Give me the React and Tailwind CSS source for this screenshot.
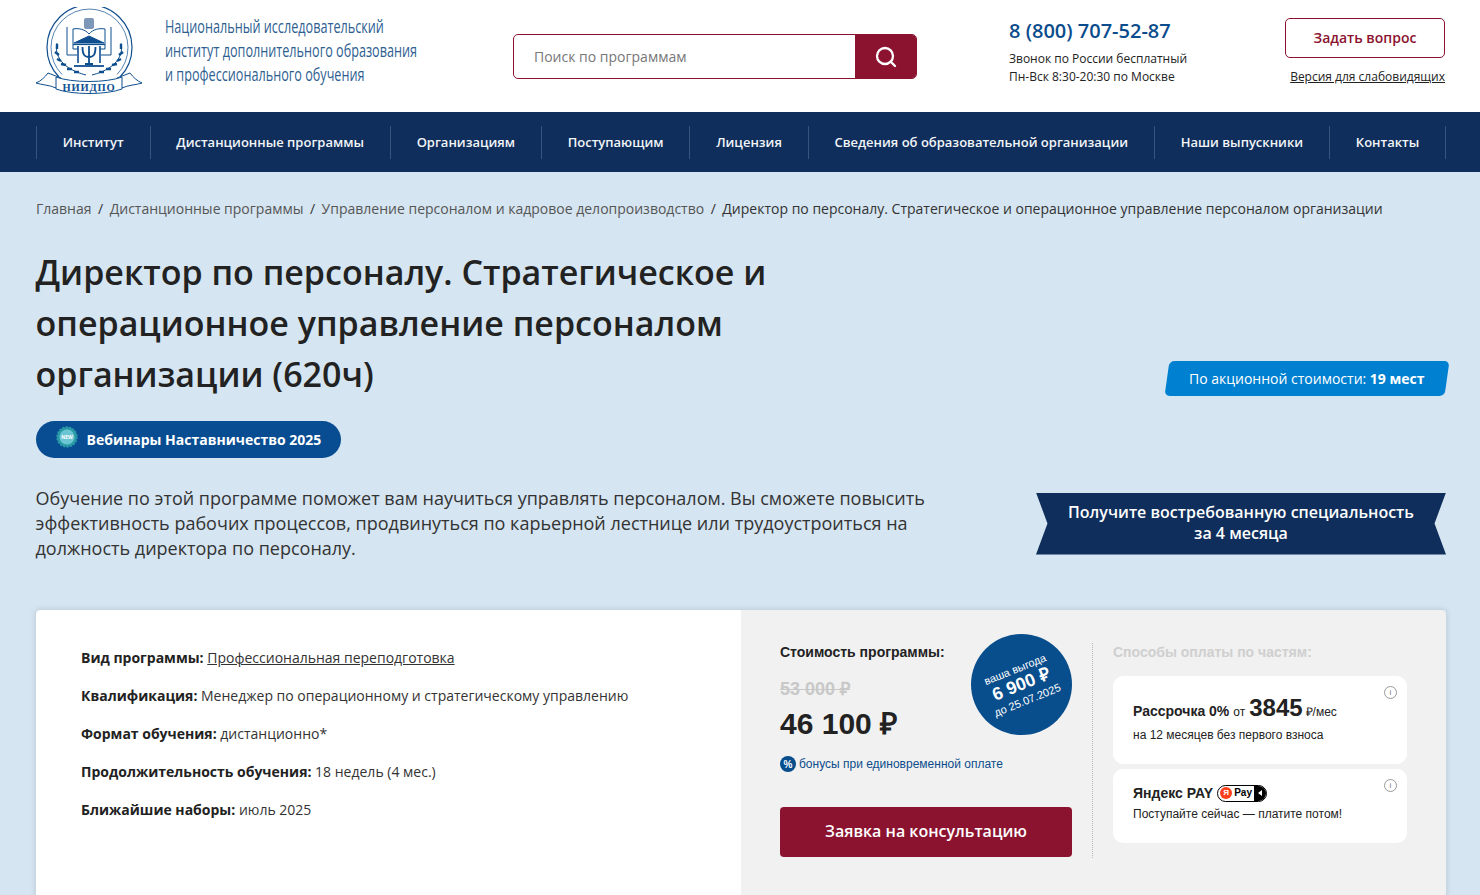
import { Search } from "lucide-react";

const navItems = [
  "Институт",
  "Дистанционные программы",
  "Организациям",
  "Поступающим",
  "Лицензия",
  "Сведения об образовательной организации",
  "Наши выпускники",
  "Контакты",
];

const crumbs = [
  "Главная",
  "Дистанционные программы",
  "Управление персоналом и кадровое делопроизводство",
];

const facts = [
  ["Квалификация:", "Менеджер по операционному и стратегическому управлению"],
  ["Формат обучения:", "дистанционно*"],
  ["Продолжительность обучения:", "18 недель (4 мес.)"],
  ["Ближайшие наборы:", "июль 2025"],
];

function Logo() {
  return (
    <svg width="108" height="90" viewBox="0 0 108 90" fill="none" stroke="#0f4f8f" strokeWidth="1" className="shrink-0">
      {/* кольцо */}
      <path d="M23 70A42.500 42.500 0 1 1 84 70" strokeWidth="1.2" />
      <path d="M26 67.500A38.500 38.500 0 1 1 81 67.500" strokeWidth="0.7" />
      {/* герб и книга */}
      <rect x="48" y="11" width="10" height="11" rx="2" fill="#7d97b8" stroke="none" />
      <path d="M53 27C49 22 42 21 37 22V42H42M53 27C57 22 64 21 69 22V42H64" />
      <path d="M31 20V48H41M75 20V48H65" />
      {/* портик и пси */}
      <path d="M38 36H68L53 29Z" fill="#0f4f8f" />
      <path d="M37 37.500H69" strokeWidth="1.2" />
      <path d="M42 39V56M64 39V56" strokeWidth="1.6" />
      <path d="M46.500 40C46.500 47 48 50 53 50C58 50 59.500 47 59.500 40M53 39V57M49 57H57" strokeWidth="1.8" />
      <path d="M38 59H68" strokeWidth="1.8" />
      {/* ветви */}
      <path d="M21 36C18 48 26 62 50 68M85 36C88 48 80 62 56 68" strokeWidth="1" />
      <path d="M21 37l0 5M19 45l4 3M21 52l4 2M25 57l5 1M31 62l5 0M38 65l5 0M85 37l0 5M87 45l-4 3M85 52l-4 2M81 57l-5 1M75 62l-5 0M68 65l-5 0" strokeWidth="2.4" />
      {/* лента */}
      <path d="M0 76C5 74 9 70 12 66L25 71L20 81C14 78 6 78 0 76ZM106 76C101 74 97 70 94 66L81 71L86 81C92 78 100 78 106 76Z" fill="#fff" />
      <path d="M20 70C36 76 70 76 86 70V82C70 88 36 88 20 82Z" fill="#fff" />
      <text x="53" y="84" textAnchor="middle" fill="#0f4f8f" stroke="none" fontSize="10.500" fontWeight="700" letterSpacing="0.8" fontFamily="Liberation Serif, serif">
        НИИДПО
      </text>
    </svg>
  );
}

function Header() {
  return (
    <header className="flex h-[112px] bg-white pl-9 pr-[34px]">
      <div className="flex w-[477px] shrink-0 pt-[7px]">
        <Logo />
        <div className="ml-[21px] mt-[7px] origin-left scale-x-[0.703] whitespace-nowrap text-[18px] leading-[24px] text-[#2f5f92]">
          <div>Национальный исследовательский</div>
          <div>институт дополнительного образования</div>
          <div>и профессионального обучения</div>
        </div>
      </div>
      <div className="mt-[34px] flex h-[45px] w-[404px] shrink-0 overflow-hidden rounded-[5px] border border-[#8b132f]">
        <div className="flex flex-1 items-center pl-5 text-[14px] text-[#777]">Поиск по программам</div>
        <div className="flex w-[61px] items-center justify-center bg-[#8b132f]">
          <Search size={24} color="#fff" strokeWidth={2.3} />
        </div>
      </div>
      <div className="ml-[92px] w-[276px] shrink-0 pt-[17px]">
        <div className="text-[20px] font-semibold leading-[27px] text-[#0b4c8c]">8 (800) 707-52-87</div>
        <div className="mt-[6px] text-[12px] leading-[18px] text-[#222]">Звонок по России бесплатный</div>
        <div className="text-[12px] leading-[18px] text-[#222]">Пн-Вск 8:30-20:30 по Москве</div>
      </div>
      <div className="w-[160px] shrink-0 pt-[18px]">
        <div className="flex h-[40px] items-center justify-center rounded-[5px] border border-[#8b132f] pb-px text-[14px] font-semibold text-[#8b132f]">
          Задать вопрос
        </div>
        <div className="mt-[10px] whitespace-nowrap text-right text-[12px] leading-[18px] text-[#222] underline">
          Версия для слабовидящих
        </div>
      </div>
    </header>
  );
}

function Nav() {
  return (
    <nav className="flex h-[60px] items-center justify-between bg-[#0f2e5b] pl-9 pr-[34px]">
      {navItems.map((item, i) => (
        <div
          key={item}
          className={`flex h-[33px] items-center whitespace-nowrap border-l border-[#38547c] px-[25.700px] pt-px text-[13px] font-semibold text-[#f2f5f8] ${
            i === navItems.length - 1 ? "border-r" : ""
          }`}
        >
          {item}
        </div>
      ))}
    </nav>
  );
}

function NewBadge() {
  return (
    <svg width="22" height="22" viewBox="0 0 22 22" className="-mt-[5px] shrink-0">
      <circle cx="11" cy="11" r="10" fill="#2a9aa6" stroke="#2a9aa6" strokeWidth="1.500" strokeDasharray="2 1.500" />
      <circle cx="11" cy="11" r="7.500" fill="#6cc5d3" />
      <text x="11" y="13" textAnchor="middle" fontSize="5" fontWeight="700" fill="#fff">NEW</text>
    </svg>
  );
}

function Intro() {
  return (
    <section className="pl-9 pr-[34px]">
      <div className="flex h-[73px] items-center whitespace-nowrap text-[14px] text-[#555]">
        {crumbs.map((c) => (
          <span key={c} className="flex">
            {c}
            <span className="mx-[6.500px] text-[#333]">/</span>
          </span>
        ))}
        <span className="text-[#333]">Директор по персоналу. Стратегическое и операционное управление персоналом организации</span>
      </div>
      <div className="mt-[2px] flex items-end justify-between">
        <h1 className="-ml-[0.500px] w-[800px] text-[34px] font-semibold leading-[51px] text-[#222]">
          Директор по персоналу. Стратегическое и операционное управление персоналом организации (620ч)
        </h1>
        <div className="-mr-px mb-[4px] flex h-[35px] w-[280px] -skew-x-[8deg] items-center justify-center rounded-[5px] bg-[#0080d0]">
          <span className="skew-x-[8deg] text-[14px] text-white">
            По акционной стоимости: <b>19 мест</b>
          </span>
        </div>
      </div>
      <div className="mt-[21px] flex h-[37px] w-[305px] items-center gap-[8.500px] rounded-full bg-[#084d92] pl-[20px] text-[14px] font-bold text-white">
        <NewBadge />
        Вебинары Наставничество 2025
      </div>
      <div className="mt-[28px] flex items-center justify-between">
        <p className="-ml-[0.500px] w-[900px] text-[18px] leading-[25px] text-[#333]">
          Обучение по этой программе поможет вам научиться управлять персоналом. Вы сможете повысить эффективность рабочих процессов, продвинуться по карьерной лестнице или трудоустроиться на должность директора по персоналу.
        </p>
        <div className="flex h-[62px] w-[410px] items-center justify-center bg-[#0f2e5b] pb-[2px] text-center text-[16px] font-semibold leading-[21px] text-white [clip-path:polygon(0_0,100%_0,97.200%_50%,100%_100%,0_100%,2.800%_50%)]">
          Получите востребованную специальность
          <br />
          за 4 месяца
        </div>
      </div>
    </section>
  );
}

function InfoIcon() {
  return (
    <span className="absolute right-[10px] top-[10px] flex h-[13px] w-[13px] items-center justify-center rounded-full border border-[#999] text-[8px] leading-none text-[#777]">
      i
    </span>
  );
}

function PayBadge() {
  return (
    <span className="inline-flex h-[17px] w-[50px] items-center overflow-hidden rounded-full border border-black bg-white align-middle">
      <span className="ml-[2px] flex h-[12px] w-[12px] items-center justify-center rounded-full bg-[#fc3f1d] text-[8px] font-bold text-white">Я</span>
      <span className="ml-[2px] text-[10px] font-bold text-black">Pay</span>
      <span className="ml-auto flex h-full w-[12px] items-center justify-center bg-black">
        <svg width="8" height="8" viewBox="0 0 8 8"><path d="M6 1L2 4l4 3z" fill="#fff" /></svg>
      </span>
    </span>
  );
}

function Card() {
  return (
    <section className="ml-9 mr-[34px] mt-[49px] flex h-[300px] shadow-[0_0_6px_rgba(0,0,0,0.15)]">
      <div className="w-[705px] shrink-0 rounded-tl-[5px] bg-white pl-[45px] pt-[36px] text-[14px] leading-[24px] text-[#333]">
        <p>
          <b className="text-[#222]">Вид программы:</b> <span className="underline">Профессиональная переподготовка</span>
        </p>
        {facts.map(([label, value]) => (
          <p key={label} className="mt-[14px]">
            <b className="text-[#222]">{label}</b> {value}
          </p>
        ))}
      </div>
      <div className="flex flex-1 rounded-tr-[5px] bg-[#f1f1f1] pl-[39px] pr-[39px] font-['Liberation_Sans',sans-serif]">
        <div className="relative w-[292px] shrink-0 pt-[33px]">
          <div className="text-[14px] font-bold leading-[18px] text-[#222]">Стоимость программы:</div>
          <div className="mt-[18px] text-[18px] font-bold leading-[20px] text-[#c8c8c8] line-through">53 000 ₽</div>
          <div className="mt-[6px] text-[30px] font-bold leading-[38px] text-[#222]">46 100 ₽</div>
          <div className="mt-[12px] flex items-center gap-[3px] text-[12px] text-[#0b4c8c]">
            <span className="flex h-[16px] w-[16px] items-center justify-center rounded-full bg-[#084d8c] text-[10px] font-bold text-white">%</span>
            бонусы при единовременной оплате
          </div>
          <div className="mt-[34px] flex h-[50px] items-center justify-center rounded-[4px] bg-[#8b132f] pb-[2px] font-['Open_Sans',sans-serif] text-[16px] font-semibold text-white">
            Заявка на консультацию
          </div>
          {/* плашка выгоды */}
          <div className="absolute right-0 top-[24px] flex h-[101px] w-[101px] items-center justify-center rounded-full bg-[#084d8c] text-center text-white">
            <div className="-rotate-[22deg]">
              <div className="text-[11px] leading-[15px]">ваша выгода</div>
              <div className="text-[18px] font-bold leading-[17px]">6 900 ₽</div>
              <div className="text-[11px] leading-[16px]">до 25.07.2025</div>
            </div>
          </div>
        </div>
        <div className="ml-[20px] mt-[33px] h-[215px] border-l border-dotted border-[#bbb]" />
        <div className="ml-[20px] flex-1 pt-[33px]">
          <div className="text-[14px] font-bold leading-[18px] text-[#cfcfcf]">Способы оплаты по частям:</div>
          <div className="relative mt-[15px] h-[88px] rounded-[10px] bg-white pl-[20px] pt-[14px] text-[#222]">
            <InfoIcon />
            <div className="flex items-baseline whitespace-nowrap text-[12px]">
              <b className="text-[14px]">Рассрочка 0%</b>
              <span className="ml-[4px]">от</span>
              <b className="ml-[4px] text-[24px]">3845</b>
              <span className="ml-[3px]">₽/мес</span>
            </div>
            <div className="mt-[1px] text-[12px] leading-[16px]">на 12 месяцев без первого взноса</div>
          </div>
          <div className="relative mt-[5px] h-[74px] rounded-[10px] bg-white pl-[20px] pt-[15px] text-[#222]">
            <InfoIcon />
            <div className="flex items-center gap-[4px] text-[14px] font-bold leading-[18px]">
              Яндекс PAY <PayBadge />
            </div>
            <div className="mt-[4px] text-[12px] leading-[16px]">Поступайте сейчас — платите потом!</div>
          </div>
        </div>
      </div>
    </section>
  );
}

export default function App() {
  return (
    <div className="h-screen overflow-hidden bg-[#d5e5f1] font-['Open_Sans',sans-serif]">
      <Header />
      <Nav />
      <Intro />
      <Card />
    </div>
  );
}
